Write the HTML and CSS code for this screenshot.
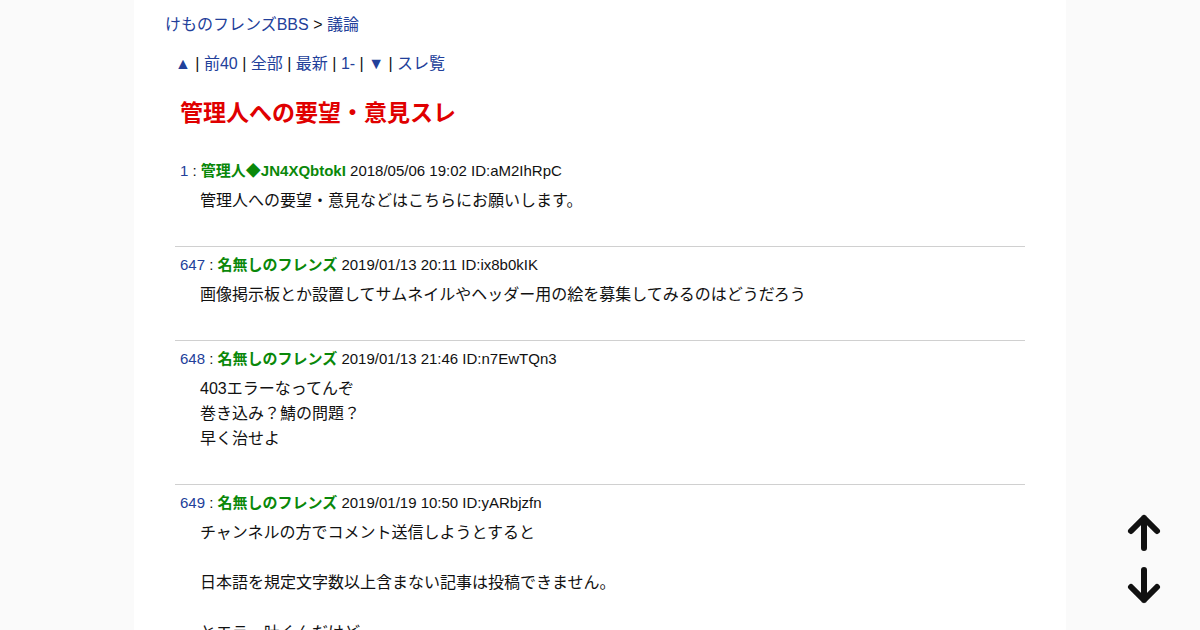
FILE: index.html
```html
<!DOCTYPE html>
<html lang="ja">
<head>
<meta charset="utf-8">
<title>管理人への要望・意見スレ</title>
<link rel="stylesheet" href="styles.css">
</head>
<body>
<div class="page">
  <div class="crumb"><a href="#">けものフレンズBBS</a> &gt; <a href="#">議論</a></div>
  <div class="nav"><a href="#">▲</a> | <a href="#">前40</a> | <a href="#">全部</a> | <a href="#">最新</a> | <a href="#">1-</a> | <a href="#">▼</a> | <a href="#">スレ覧</a></div>
  <h1 class="title">管理人への要望・意見スレ</h1>
  <div class="posts">
    <div class="post first">
      <div class="head"><a class="num" href="#">1</a> : <b class="name">管理人◆JN4XQbtokI</b> 2018/05/06 19:02 ID:aM2IhRpC</div>
      <div class="body">管理人への要望・意見などはこちらにお願いします。</div>
    </div>
    <div class="post">
      <div class="head"><a class="num" href="#">647</a> : <b class="name">名無しのフレンズ</b> 2019/01/13 20:11 ID:ix8b0kIK</div>
      <div class="body">画像掲示板とか設置してサムネイルやヘッダー用の絵を募集してみるのはどうだろう</div>
    </div>
    <div class="post">
      <div class="head"><a class="num" href="#">648</a> : <b class="name">名無しのフレンズ</b> 2019/01/13 21:46 ID:n7EwTQn3</div>
      <div class="body">403エラーなってんぞ<br>巻き込み？鯖の問題？<br>早く治せよ</div>
    </div>
    <div class="post">
      <div class="head"><a class="num" href="#">649</a> : <b class="name">名無しのフレンズ</b> 2019/01/19 10:50 ID:yARbjzfn</div>
      <div class="body">チャンネルの方でコメント送信しようとすると<br><br>日本語を規定文字数以上含まない記事は投稿できません。<br><br>とエラー吐くんだけど</div>
    </div>
  </div>
</div>
<div class="scroller">
  <svg width="36" height="92" viewBox="0 0 36 92" fill="none" stroke="#111" stroke-width="6" stroke-linecap="round" stroke-linejoin="round">
    <path d="M18 36 V6 M5 19 L18 6 L31 19"/>
    <path d="M18 58 V88 M5 75 L18 88 L31 75"/>
  </svg>
</div>
</body>
</html>
```

FILE: styles.css
```css
html, body {
  margin: 0;
  padding: 0;
  background: #fafafa;
  overflow: hidden;
}
body {
  font-family: "Liberation Sans", "Noto Sans CJK JP", sans-serif;
  font-size: 16px;
  color: #111;
}
a {
  color: #22409a;
  text-decoration: none;
}
.page {
  width: 932px;
  margin: 0 auto;
  background: #fff;
  min-height: 700px;
  padding: 13px 0 0 31px;
  box-sizing: border-box;
}
.crumb {
  line-height: 24px;
}
.nav {
  line-height: 24px;
  margin: 15px 0 0 10px;
}
.title {
  margin: 22px 0 0 15px;
  font-size: 23px;
  line-height: 30px;
  color: #e00000;
  font-weight: bold;
}
.posts {
  width: 850px;
  margin: 33px 0 0 10px;
}
.post {
  border-top: 1px solid #d0d0d0;
  padding: 8px 0 33px 0;
}
.post.first {
  border-top: none;
  padding-top: 0;
}
.head {
  font-size: 15px;
  line-height: 20px;
  padding-left: 5px;
}
.name {
  color: #0a880a;
  font-weight: bold;
}
.body {
  margin-top: 7px;
  padding-left: 25px;
  line-height: 25px;
}
.scroller {
  position: fixed;
  left: 1126px;
  top: 512px;
  line-height: 0;
}
```
